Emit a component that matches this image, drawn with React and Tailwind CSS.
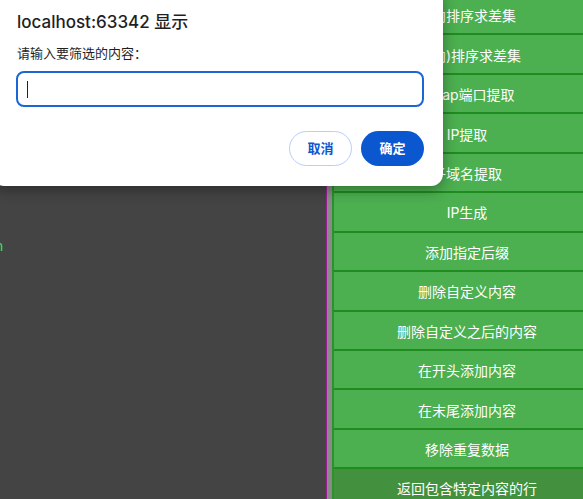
const tools = [
  "正向排序求差集",
  "(反向)排序求差集",
  "Nmap端口提取",
  "IP提取",
  "子域名提取",
  "IP生成",
  "添加指定后缀",
  "删除自定义内容",
  "删除自定义之后的内容",
  "在开头添加内容",
  "在末尾添加内容",
  "移除重复数据",
  "返回包含特定内容的行",
];

const font = { fontFamily: '"Inter", "Noto Sans CJK SC", sans-serif' };

function PromptDialog() {
  return (
    <div className="absolute left-[-8px] top-[-12px] w-[451px] h-[198px] rounded-[12px] bg-white shadow-[0_4px_14px_rgba(0,0,0,0.35)] pl-[25px] pr-[20px] pt-[22px]">
      <div className="text-[17px] leading-[24px] font-medium text-[#1f1f1f]">localhost:63342 显示</div>
      <div className="mt-[10px] text-[13px] leading-[18px] text-[#1f1f1f]">请输入要筛选的内容：</div>
      <div className="mt-[9px] ml-[-1px] h-[36px] w-[408px] rounded-[8px] border-2 border-[#1a66d2] flex items-center pl-[9px]">
        <div className="w-px h-[17px] bg-[#222]" />
      </div>
      <div className="mt-[24px] w-[408px] flex justify-end gap-[9px] pr-px">
        <button className="h-[35px] w-[63px] rounded-full border border-[#b7cffa] bg-white text-[13px] font-bold text-[#0b57d0]">
          取消
        </button>
        <button className="h-[35px] w-[63px] rounded-full bg-[#0b57d0] text-[13px] font-bold text-white">
          确定
        </button>
      </div>
    </div>
  );
}

export default function App() {
  return (
    <div className="relative w-[583px] h-[499px] overflow-hidden bg-[#444444] flex" style={font}>
      <div className="w-[326px] shrink-0 pt-[236px]">
        <div className="ml-[-5px] text-[14px] leading-[20px] text-[#22ee55]">n</div>
      </div>
      <div className="w-px shrink-0 bg-[#9a1f92]" />
      <div className="w-[5px] shrink-0 bg-[#8a8a8a]" />
      <div className="w-[268px] shrink-0 mt-[-4px] flex flex-col border-l-2 border-[#2a932a]">
        {tools.map((t, i) => (
          <button
            key={t}
            className={`h-[39.45px] shrink-0 border-b-2 border-[#1f8c1f] pt-[2px] text-[14px] font-normal text-white ${
              i === tools.length - 1 ? "bg-[#43913f]" : "bg-[#4caf50]"
            }`}
          >
            {t}
          </button>
        ))}
      </div>
      <PromptDialog />
    </div>
  );
}
